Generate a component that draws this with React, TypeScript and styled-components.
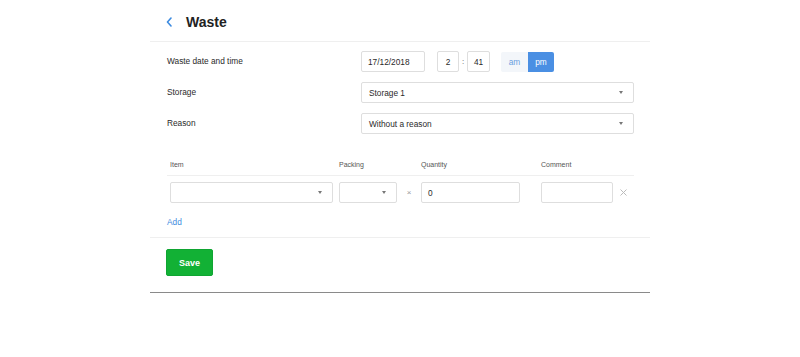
import React from 'react';
import styled, { createGlobalStyle } from 'styled-components';

const GlobalStyle = createGlobalStyle`
  body {
    margin: 0;
    background: #fff;
    font-family: "Liberation Sans", Arial, sans-serif;
    color: #333;
  }
`;

const Page = styled.div`
  width: 500px;
  margin: 0 auto;
  border-bottom: 1px solid #8a8a8a;
`;

const Header = styled.header`
  height: 39px;
  padding-top: 3px;
  box-sizing: content-box;
  display: flex;
  align-items: center;
  border-bottom: 1px solid #efefef;
  margin-top: -1px;
`;

const BackButton = styled.button`
  border: 0;
  background: none;
  padding: 0;
  margin: 0 13px 0 15px;
  width: 8px;
  height: 12px;
  display: flex;
  align-items: center;
  justify-content: center;
  color: #3d8be0;
  cursor: pointer;
`;

const Title = styled.h1`
  margin: 0;
  font-size: 14px;
  font-weight: 700;
  color: #222;
`;

const Section = styled.section`
  padding: 9px 16px 0 17px;
  border-bottom: 1px solid #efefef;
  height: 196px;
  box-sizing: border-box;
`;

const FormRows = styled.div`
  display: flex;
  flex-direction: column;
  gap: 10px;
`;

const FormRow = styled.div`
  display: grid;
  grid-template-columns: 194px 1fr;
  align-items: center;
  height: 21px;
`;

const Label = styled.div`
  font-size: 8.3px;
  color: #2a2a2a;
  margin-top: -1px;
`;

const Controls = styled.div`
  display: flex;
  align-items: center;
`;

const TextBox = styled.div<{ $w: number; $ml?: number; $center?: boolean }>`
  width: ${(p) => p.$w}px;
  margin-left: ${(p) => p.$ml ?? 0}px;
  height: 21px;
  box-sizing: border-box;
  border: 1px solid #dedede;
  border-radius: 2px;
  background: #fff;
  font-size: 8.3px;
  color: #2a2a2a;
  display: flex;
  align-items: center;
  justify-content: ${(p) => (p.$center ? 'center' : 'flex-start')};
  padding: 0 ${(p) => (p.$center ? 0 : 6)}px;
`;

const Colon = styled.span`
  width: 8px;
  text-align: center;
  font-size: 8px;
  color: #555;
`;

const Toggle = styled.div`
  display: flex;
  margin-left: 11px;
  height: 20px;
  border-radius: 2px;
  overflow: hidden;
`;

const ToggleOption = styled.div<{ $active?: boolean; $w: number }>`
  width: ${(p) => p.$w}px;
  display: flex;
  align-items: center;
  justify-content: center;
  font-size: 8.3px;
  background: ${(p) => (p.$active ? '#4a8fe3' : '#f3f6fa')};
  color: ${(p) => (p.$active ? '#fff' : '#6a9fe0')};
`;

const SelectBox = styled.div<{ $w?: number }>`
  width: ${(p) => (p.$w ? `${p.$w}px` : '100%')};
  height: 21px;
  box-sizing: border-box;
  border: 1px solid #dedede;
  border-radius: 2px;
  background: #fff;
  display: flex;
  align-items: center;
  justify-content: space-between;
  padding: 0 10px 0 7px;
  font-size: 8.3px;
  color: #2a2a2a;
`;

const Caret = styled.span`
  width: 0;
  height: 0;
  border-left: 2.5px solid transparent;
  border-right: 2.5px solid transparent;
  border-top: 3px solid #777;
`;

const Table = styled.div`
  margin-top: 21px;
  padding-left: 3px;
`;

const TableRow = styled.div<{ $head?: boolean }>`
  display: grid;
  grid-template-columns: 169px 58px 24px 120px 72px 20px;
  align-items: center;
  height: ${(p) => (p.$head ? 20 : 21)}px;
  margin-left: ${(p) => (p.$head ? -3 : 0)}px;
  padding-left: ${(p) => (p.$head ? 3 : 0)}px;
  border-bottom: ${(p) => (p.$head ? '1px solid #efefef' : 'none')};
  margin-top: ${(p) => (p.$head ? 0 : 6)}px;
`;

const HeadCell = styled.div`
  font-size: 7px;
  color: #555;
  margin-top: -1px;
`;

const Multiply = styled.div`
  text-align: center;
  font-size: 8px;
  color: #999;
`;

const RemoveButton = styled.button`
  border: 0;
  background: none;
  padding: 0;
  display: flex;
  align-items: center;
  justify-content: center;
  color: #bbb;
  cursor: pointer;
`;

const AddLink = styled.a`
  display: inline-block;
  margin-top: 14px;
  font-size: 8.3px;
  color: #3d8be0;
  text-decoration: none;
  cursor: pointer;
`;

const Footer = styled.div`
  padding: 11px 0 16px 16px;
`;

const SaveButton = styled.button`
  width: 47px;
  height: 27px;
  border: 1px solid #0fa532;
  border-radius: 2px;
  background: #12b135;
  color: #fff;
  font-family: "Liberation Sans", Arial, sans-serif;
  font-size: 9px;
  font-weight: 700;
  cursor: pointer;
`;

export default function App() {
  return (
    <>
      <GlobalStyle />
      <Page>
        <Header>
          <BackButton aria-label="Back">
            <svg width="6" height="10" viewBox="0 0 6 10" fill="none">
              <path d="M5 1L1.5 5L5 9" stroke="currentColor" strokeWidth="1.6" strokeLinecap="round" strokeLinejoin="round" />
            </svg>
          </BackButton>
          <Title>Waste</Title>
        </Header>

        <Section>
          <FormRows>
            <FormRow>
              <Label>Waste date and time</Label>
              <Controls>
                <TextBox $w={64}>17/12/2018</TextBox>
                <TextBox $w={22} $ml={12} $center>2</TextBox>
                <Colon>:</Colon>
                <TextBox $w={23} $center>41</TextBox>
                <Toggle>
                  <ToggleOption $w={27}>am</ToggleOption>
                  <ToggleOption $w={26} $active>pm</ToggleOption>
                </Toggle>
              </Controls>
            </FormRow>
            <FormRow>
              <Label>Storage</Label>
              <SelectBox>
                <span>Storage 1</span>
                <Caret />
              </SelectBox>
            </FormRow>
            <FormRow>
              <Label>Reason</Label>
              <SelectBox>
                <span>Without a reason</span>
                <Caret />
              </SelectBox>
            </FormRow>
          </FormRows>

          <Table>
            <TableRow $head>
              <HeadCell>Item</HeadCell>
              <HeadCell>Packing</HeadCell>
              <div />
              <HeadCell>Quantity</HeadCell>
              <HeadCell>Comment</HeadCell>
              <div />
            </TableRow>
            <TableRow>
              <SelectBox $w={163}>
                <span />
                <Caret />
              </SelectBox>
              <SelectBox $w={58}>
                <span />
                <Caret />
              </SelectBox>
              <Multiply>×</Multiply>
              <TextBox $w={99}>0</TextBox>
              <TextBox $w={72} />
              <RemoveButton aria-label="Remove">
                <svg width="7" height="7" viewBox="0 0 7 7">
                  <path d="M0.5 0.5L6.5 6.5M6.5 0.5L0.5 6.5" stroke="currentColor" strokeWidth="1" />
                </svg>
              </RemoveButton>
            </TableRow>
          </Table>
          <AddLink>Add</AddLink>
        </Section>

        <Footer>
          <SaveButton>Save</SaveButton>
        </Footer>
      </Page>
    </>
  );
}
